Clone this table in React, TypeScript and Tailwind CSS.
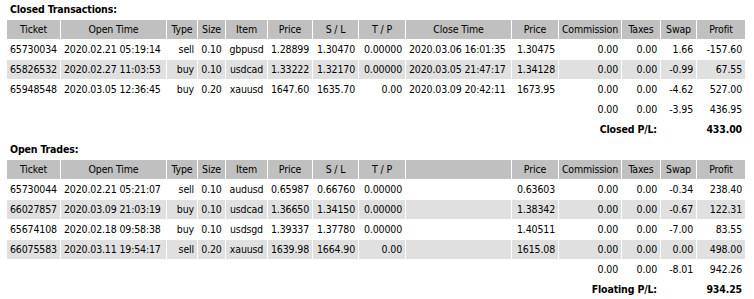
import clsx from "clsx";

type Align = "l" | "c" | "r";

const COLS =
  "grid grid-cols-[53px_105px_30px_27px_41px_44px_45px_46px_105px_46px_62px_38px_35px_48px] gap-px";

// alignment of data cells, column by column
const ALIGN: Align[] = ["l", "l", "r", "c", "c", "r", "r", "r", "l", "r", "r", "r", "r", "r"];

const HEAD_CLOSED = [
  "Ticket",
  "Open Time",
  "Type",
  "Size",
  "Item",
  "Price",
  "S / L",
  "T / P",
  "Close Time",
  "Price",
  "Commission",
  "Taxes",
  "Swap",
  "Profit",
];

const HEAD_OPEN = HEAD_CLOSED.map((h, i) => (i === 8 ? "" : h));

const closed = [
  ["65730034", "2020.02.21 05:19:14", "sell", "0.10", "gbpusd", "1.28899", "1.30470", "0.00000", "2020.03.06 16:01:35", "1.30475", "0.00", "0.00", "1.66", "-157.60"],
  ["65826532", "2020.02.27 11:03:53", "buy", "0.10", "usdcad", "1.33222", "1.32170", "0.00000", "2020.03.05 21:47:17", "1.34128", "0.00", "0.00", "-0.99", "67.55"],
  ["65948548", "2020.03.05 12:36:45", "buy", "0.20", "xauusd", "1647.60", "1635.70", "0.00", "2020.03.09 20:42:11", "1673.95", "0.00", "0.00", "-4.62", "527.00"],
];

const open = [
  ["65730044", "2020.02.21 05:21:07", "sell", "0.10", "audusd", "0.65987", "0.66760", "0.00000", "", "0.63603", "0.00", "0.00", "-0.34", "238.40"],
  ["66027857", "2020.03.09 21:03:19", "buy", "0.10", "usdcad", "1.36650", "1.34150", "0.00000", "", "1.38342", "0.00", "0.00", "-0.67", "122.31"],
  ["65674108", "2020.02.18 09:58:38", "buy", "0.10", "usdsgd", "1.39337", "1.37780", "0.00000", "", "1.40511", "0.00", "0.00", "-7.00", "83.55"],
  ["66075583", "2020.03.11 19:54:17", "sell", "0.20", "xauusd", "1639.98", "1664.90", "0.00", "", "1615.08", "0.00", "0.00", "0.00", "498.00"],
];

const Cell = ({
  children,
  align = "r",
  className,
}: {
  children?: React.ReactNode;
  align?: Align;
  className?: string;
}) => (
  <div
    className={clsx(
      "h-[19px] px-[3px] flex items-center whitespace-nowrap overflow-visible",
      align === "l" && "justify-start",
      align === "c" && "justify-center",
      align === "r" && "justify-end",
      className
    )}
  >
    {children}
  </div>
);

const Section = ({
  title,
  head,
  rows,
  totals,
  label,
  result,
}: {
  title: string;
  head: string[];
  rows: string[][];
  totals: string[];
  label: string;
  result: string;
}) => (
  <div className="flex flex-col">
    <div className="h-5 pl-[3px] flex items-center font-bold">{title}</div>
    <div className={clsx(COLS, "mb-px")}>
      {head.map((h, i) => (
        <Cell key={i} align="c" className="bg-[#c0c0c0]">
          {h}
        </Cell>
      ))}
      {rows.map((r, ri) =>
        r.map((v, i) => (
          <Cell
            key={`${ri}-${i}`}
            align={ALIGN[i]}
            className={ri % 2 === 1 ? "bg-[#e0e0e0]" : undefined}
          >
            {v}
          </Cell>
        ))
      )}
      <div className="col-span-10" />
      {totals.map((v, i) => (
        <Cell key={`t-${i}`}>{v}</Cell>
      ))}
      <Cell className="col-span-12 font-bold">{label}</Cell>
      <div />
      <Cell className="font-bold">{result}</Cell>
    </div>
  </div>
);

export default function App() {
  return (
    <div className="w-[754px] h-[299px] bg-white text-black pl-[7px] font-['DejaVu_Sans_Condensed','DejaVu_Sans',sans-serif] text-[10.5px] tracking-[-0.15px] overflow-hidden">
      <Section
        title="Closed Transactions:"
        head={HEAD_CLOSED}
        rows={closed}
        totals={["0.00", "0.00", "-3.95", "436.95"]}
        label="Closed P/L:"
        result="433.00"
      />
      <Section
        title="Open Trades:"
        head={HEAD_OPEN}
        rows={open}
        totals={["0.00", "0.00", "-8.01", "942.26"]}
        label="Floating P/L:"
        result="934.25"
      />
    </div>
  );
}
